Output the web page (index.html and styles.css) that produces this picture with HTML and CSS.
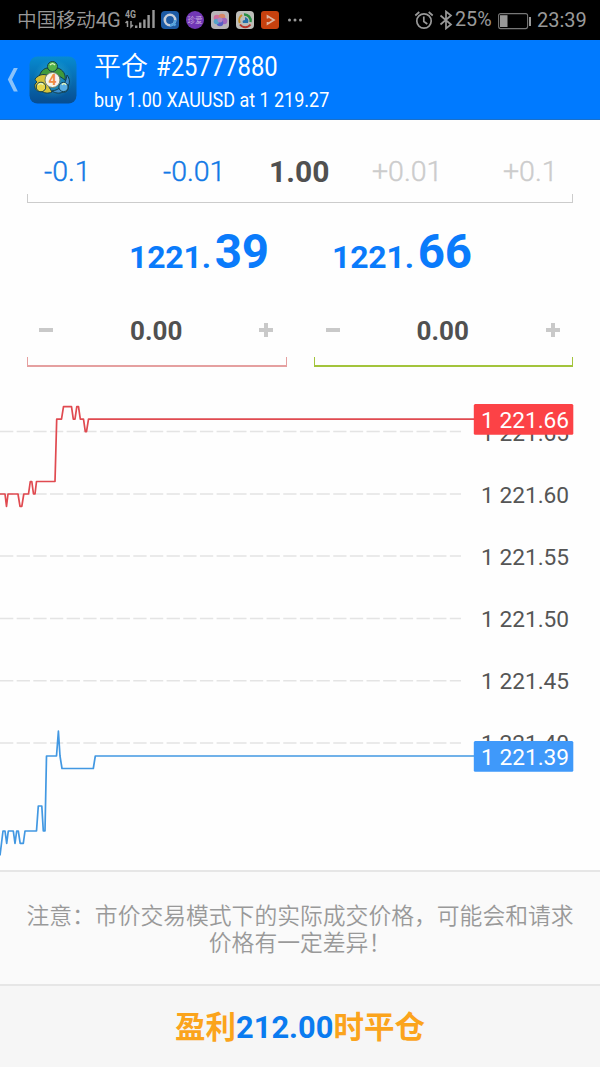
FILE: index.html
```html
<!DOCTYPE html>
<html lang="zh-CN">
<head>
<meta charset="utf-8">
<title>平仓 #25777880</title>
<link rel="stylesheet" href="styles.css">
</head>
<body>
<div class="app">
  <div class="status">
    <span class="carrier">中国移动<span class="carrier-net">4G</span></span>
    <svg class="signal" width="32" height="24" viewBox="0 0 32 24">
      <text class="signal-text" x="0" y="9.5" textLength="11" lengthAdjust="spacingAndGlyphs">4G</text>
      <path d="M2.500 13v6M.5 15l2-2M6 13v6l2-2" fill="none" stroke="#999" stroke-width="1.500"/>
      <path d="M11.200 17.500v2.500M15.200 14.500v5.500M19.400 11.500v8.500M23.600 7v13M28.500 2v18" fill="none" stroke="#999" stroke-width="2.400"/>
    </svg>
    <svg class="tray" width="144" height="20" viewBox="0 0 144 20">
      <rect x="1" y="1" width="18" height="18" rx="4" fill="#1d5aa3"/>
      <circle cx="10" cy="10" r="5.200" fill="none" stroke="#c8ced8" stroke-width="2.600"/>
      <path d="M10 15.200a5.200 5.200 0 0 0 5.200-5.200M13 13l2.500 2.500" fill="none" stroke="#55a4df" stroke-width="2.400"/>
      <circle cx="35" cy="10" r="9" fill="#7137b5"/>
      <text class="tray-text" x="35" y="12.800" text-anchor="middle">珍爱</text>
      <rect x="51" y="1" width="18" height="18" rx="4" fill="#b9b5b8"/>
      <circle cx="57" cy="8" r="3.300" fill="#cf6d9d"/><circle cx="62" cy="7" r="3.300" fill="#d78767"/>
      <circle cx="64" cy="11" r="3.300" fill="#a067bd"/><circle cx="60" cy="13" r="3.300" fill="#595ec4"/>
      <circle cx="56.500" cy="11.500" r="2.800" fill="#56a4c9"/><circle cx="60" cy="10" r="2.500" fill="#a886c9"/>
      <rect x="76" y="1" width="18" height="18" rx="4" fill="#bdbdb9"/>
      <path d="M79.800 13A6.500 6.500 0 0 1 82 5" fill="none" stroke="#c58c26" stroke-width="2"/>
      <path d="M84 4.500A6.200 6.200 0 0 1 90.500 12" fill="none" stroke="#278f43" stroke-width="2.500"/>
      <path d="M80 14.500a6.500 6.500 0 0 0 10.500 0" fill="none" stroke="#b7362b" stroke-width="2"/>
      <path d="M85 7c3 1 4 3 3 6h-5c-1-2 0-3 2-3z" fill="#2671aa"/>
      <rect x="101" y="1" width="18" height="18" rx="3" fill="#c7410e"/>
      <path d="M107.500 8.500V6L114 10l-6.500 4V12" fill="none" stroke="#ddb5a1" stroke-width="1.700"/>
      <g fill="#999"><circle cx="129.500" cy="10" r="1.500"/><circle cx="135" cy="10" r="1.500"/><circle cx="140.500" cy="10" r="1.500"/></g>
    </svg>
    <svg class="alarm" width="20" height="20" viewBox="0 0 20 20" fill="none" stroke="#999" stroke-width="1.700">
      <circle cx="10" cy="11" r="7.200"/><path d="M9.800 6.500v5l3.500 2.500M1.300 5.500l4-3.500M18.700 5.500l-4-3.500"/>
    </svg>
    <svg class="bluetooth" width="14" height="20" viewBox="0 0 14 20" fill="none" stroke="#999" stroke-width="1.700">
      <path d="M1.500 5.500l10.500 9-5 4V1.500l5 4-10.500 9"/>
    </svg>
    <span class="percent">25%</span>
    <svg class="battery" width="34" height="18" viewBox="0 0 34 18">
      <rect x=".6" y="1.600" width="29" height="15" rx="2" fill="none" stroke="#777" stroke-width="1.100"/>
      <rect x="2" y="3.200" width="7.500" height="11.800" fill="#999"/><rect x="31" y="5" width="2" height="9" fill="#999"/>
    </svg>
    <span class="clock">23:39</span>
  </div>

  <div class="header">
    <svg class="back" width="12" height="26" viewBox="0 0 12 26"><path d="M10.800 1H6.800L.8 12.500l6 12h4l-5.800-12z" fill="#8ac2fa"/></svg>
    <svg class="logo" width="48" height="48" viewBox="0 0 48 48">
      <defs>
        <linearGradient id="tile" x1="0" y1="0" x2="0" y2="1"><stop offset="0" stop-color="#078bd0"/><stop offset="1" stop-color="#074d91"/></linearGradient>
        <radialGradient id="glow"><stop offset="0" stop-color="#48cad5"/><stop offset="1" stop-color="#48cad5" stop-opacity="0"/></radialGradient>
      </defs>
      <rect x=".5" y=".5" width="47" height="47" rx="8" fill="url(#tile)"/>
      <circle cx="24" cy="23" r="20" fill="url(#glow)" opacity=".6"/>
      <g stroke="#123e4c" stroke-width="1">
        <path d="M10 24c0-6 3-11 8-12 2 3 9 3 11 0 5 2 8 6 7 12-4-3-7-5-12-6-6 1-9 3-14 6z" fill="#3f9a3c"/>
        <circle cx="23.500" cy="10.500" r="5" fill="#54b34b"/>
        <path d="M6 23c4-5 10-6 15-2l-1 10c1 2 2 3 3 5-4 2-8 1-11-1-5 1-7-3-6-7l2-2c-1-1-2-2-2-3z" fill="#d5c23a"/>
        <circle cx="12" cy="31" r="4.800" fill="#e8d64b"/>
        <path d="M38 19c3 4 3 8 1 11 1 4-2 7-5 6-4 2-8 1-11-1 7-1 14-6 15-16z" fill="#3e8fd0"/>
        <circle cx="34.500" cy="31" r="4.600" fill="#5aaee4"/>
      </g>
      <path d="M21 9c2-2 3-2 5 0M9 29c2-2 4-2 5 0M33 29c1-2 3-2 4 0" fill="none" stroke="#e2f5c0" stroke-width="1.400"/>
      <circle cx="23.500" cy="24" r="7.500" fill="#f5f3ed" stroke="#6e7f68"/>
      <text class="logo-text" x="23.500" y="29" text-anchor="middle">4</text>
    </svg>
    <div class="titles">
      <div class="title"><span class="title-cn">平仓</span><span class="title-num">#25777880</span></div>
      <div class="subtitle">buy 1.00 XAUUSD at 1 219.27</div>
    </div>
  </div>

  <div class="volume">
    <span class="step step-a">-0.1</span><span class="step step-b">-0.01</span><span class="lots">1.00</span><span class="step step-c">+0.01</span><span class="step step-d">+0.1</span>
  </div>

  <div class="prices">
    <div class="price">1221<span class="dot">.</span><span class="pips">39</span></div>
    <div class="price">1221<span class="dot">.</span><span class="pips">66</span></div>
  </div>

  <div class="levels">
    <div class="level level-stop"><span class="sign"></span><span class="value">0.00</span><span class="sign plus"></span></div>
    <div class="level level-profit"><span class="sign"></span><span class="value">0.00</span><span class="sign plus"></span></div>
  </div>

  <svg class="chart" width="600" height="490" viewBox="0 380 600 490">
    <path class="grid" d="M0 431.500H461M0 494H461M0 556H461M0 618.500H461M0 680.700H461M0 743H461"/>
    <g class="axis">
      <text x="481" y="440.700">1 221.65</text>
      <text x="481" y="503">1 221.60</text>
      <text x="481" y="565.200">1 221.55</text>
      <text x="481" y="627.400">1 221.50</text>
      <text x="481" y="689.400">1 221.45</text>
      <text x="481" y="751.400">1 221.40</text>
    </g>
    <path class="line ask" d="M0 494H5L6.500 506.300L8 494H18L20 506.300H21.800L23.800 494H28.500L30.300 481.500H31.800L33.500 494H35L36.500 481.500H55L56.700 419.200H61.500L63.500 406.700H71.500L73.300 419.200H75L76.800 406.700H78.500L80.300 419.200H83.500L85.300 431.700H86.500L88.500 419.200H474"/>
    <path class="line bid" d="M0 855.500L3 831H5L6.700 843.300L8.300 831H13.300L15 843.300L16.700 831H18.300L20.200 843.300H23.300L25 831H36.500L38.300 806H41.800L43.300 831H45L46.500 756H56.500L58.400 731.200L60 756L62 768.500H93.300L95.300 756H474"/>
    <rect x="473.800" y="404" width="99.500" height="30.800" rx="1.500" fill="#fc4246"/>
    <rect x="473.800" y="741" width="99.500" height="30.800" rx="1.500" fill="#3f99fa"/>
    <g class="axis tag"><text x="481" y="428">1 221.66</text><text x="481" y="765">1 221.39</text></g>
  </svg>

  <div class="notice">注意：市价交易模式下的实际成交价格，可能会和请求<br>价格有一定差异！</div>
  <div class="close">盈利<span class="profit">212.00</span>时平仓</div>
</div>
</body>
</html>
```
FILE: styles.css
```css
* { box-sizing: border-box; }
body {
  margin: 0;
  background: #fefefe;
  font-family: Roboto, "Noto Sans CJK SC", sans-serif;
}
.app {
  width: 600px;
  height: 1067px;
  display: flex;
  flex-direction: column;
  overflow: hidden;
}
svg { display: block; flex: none; }

.status {
  height: 40px;
  flex: none;
  display: flex;
  align-items: center;
  padding-left: 17px;
  background: #000;
  color: #999;
  white-space: nowrap;
  line-height: 42px;
}
.carrier { width: 108px; font-size: 19.700px; font-weight: 350; }
.carrier-net { font-size: 20.200px; font-weight: 400; }
.signal { margin-top: -1px; }
.signal-text { font: 700 11px Roboto, sans-serif; fill: #999; }
.tray { margin-left: 3px; }
.tray-text { font: 7.500px "Noto Sans CJK SC", sans-serif; fill: #c3a6dc; }
.alarm { margin-left: 110px; }
.bluetooth { margin-left: 5px; }
.percent { margin-left: 2px; width: 43px; font-size: 19.700px; }
.battery { margin-top: 1px; }
.clock { margin-left: 5px; font-size: 20px; }

.header {
  height: 80px;
  flex: none;
  display: flex;
  align-items: center;
  padding-left: 7px;
  background: #007aff;
  border-bottom: 1px solid #1c70c8;
  color: #fff;
}
.logo { margin-left: 10px; }
.logo-text { font: 700 14px Roboto, sans-serif; fill: #ef8a42; }
.titles { margin-left: 17px; white-space: nowrap; }
.title { height: 36px; line-height: 36px; display: flex; margin-top: 2px; }
.title-cn { width: 62px; font-size: 27px; font-weight: 350; }
.title-num { font-size: 28.500px; transform: scaleX(.835); transform-origin: left; }
.subtitle {
  height: 28px;
  line-height: 30px;
  font-size: 21px;
  transform: scaleX(.855);
  transform-origin: left;
}

.volume {
  height: 43px;
  flex: none;
  margin: 40px 27px 0 27px;
  padding-bottom: 21px;
  display: flex;
  align-items: center;
  position: relative;
  white-space: nowrap;
  font-size: 28.500px;
  font-weight: 300;
}
.volume::after, .level::after {
  content: "";
  position: absolute;
  left: 0;
  right: 0;
  bottom: 0;
  height: 8px;
  border: solid #ccc;
  border-width: 0 1px 1.500px;
}
.step { color: #1279e6; -webkit-text-stroke: .4px currentColor; }
.step-a { width: 119px; padding-left: 17px; }
.step-b { width: 123px; padding-left: 17px; }
.lots { width: 103px; font-size: 30px; font-weight: 700; color: #505050; }
.step-c { width: 131px; color: #ccc; }
.step-d { color: #ccc; }

.prices {
  height: 76px;
  flex: none;
  display: flex;
  padding-left: 129px;
  color: #0a7bfb;
  font-weight: 700;
}
.price { width: 203px; line-height: 98px; font-size: 32px; letter-spacing: -.2px; white-space: nowrap; }
.dot { margin-right: 4px; }
.pips { font-size: 47.500px; }

.levels { height: 101px; flex: none; display: flex; gap: 27px; padding: 36px 27px 0; }
.level {
  position: relative;
  flex: 1;
  height: 52px;
  padding: 1px 13px 0 12px;
  display: flex;
  justify-content: space-between;
  align-items: flex-start;
}
.level::after { border-width: 0 1.500px 2px; }
.level-stop::after { border-color: #e5a0a0; }
.level-profit::after { border-color: #a3c43c; }
.value { font-size: 26px; font-weight: 700; line-height: 30px; color: #505050; }
.sign {
  width: 14px;
  height: 14px;
  margin-top: 7px;
  background: linear-gradient(#c9c9c9, #c9c9c9) center / 14px 4px no-repeat;
}
.plus {
  background: linear-gradient(#c9c9c9, #c9c9c9) center / 14px 4px no-repeat,
    linear-gradient(#c9c9c9, #c9c9c9) center / 4px 14px no-repeat;
}

.chart { height: 490px; }
.grid { fill: none; stroke: #e4e4e4; stroke-width: 1.500; stroke-dasharray: 13.300 3.360; }
.axis { font-size: 22.700px; fill: #555; }
.tag { fill: #fff; }
.line { fill: none; stroke-width: 1.700; stroke-linejoin: round; }
.ask { stroke: #e04a50; }
.bid { stroke: #4298e2; }

.notice {
  height: 114px;
  flex: none;
  padding-top: 32px;
  border-top: 2px solid #e6e6e6;
  background: #fafafa;
  color: #999;
  font-size: 22.800px;
  font-weight: 350;
  line-height: 26.500px;
  text-align: center;
  white-space: nowrap;
}
.close {
  flex: 1;
  border-top: 2px solid #e6e6e6;
  background: #f6f6f6;
  color: #fba41c;
  font-size: 30.500px;
  font-weight: 700;
  line-height: 84px;
  text-align: center;
}
.profit { color: #0a7bf0; font-size: 30.800px; }
```
